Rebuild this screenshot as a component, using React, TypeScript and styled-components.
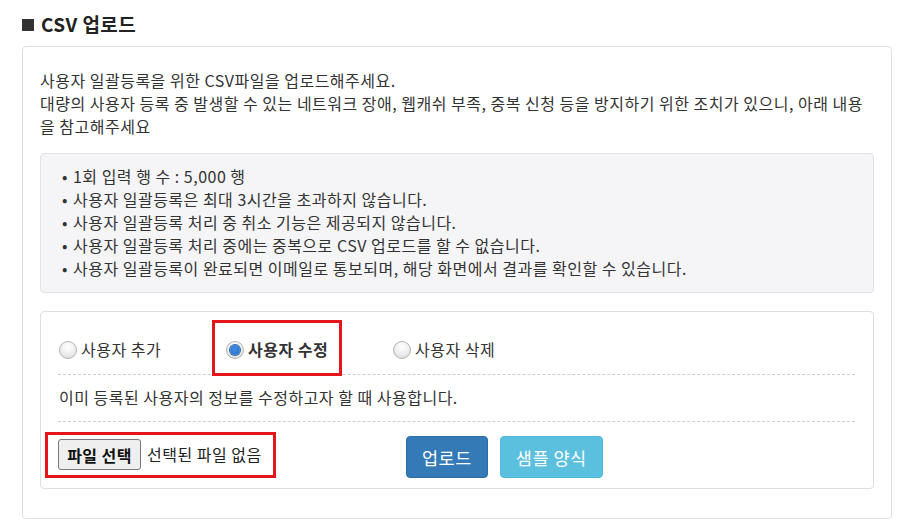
import React from "react";
import styled, { createGlobalStyle } from "styled-components";

const GlobalStyle = createGlobalStyle`
  html, body { margin: 0; padding: 0; background: #fff; }
  body {
    font-family: "Noto Sans CJK KR", "Noto Sans", sans-serif;
    color: #333;
    font-size: 16px;
    letter-spacing: 0.5px;
    line-height: 23px;
  }
  * { box-sizing: border-box; }
`;

const Page = styled.div`
  padding: 12px 15px 13px 22px;
  width: 907px;
`;

const Title = styled.h4`
  margin: 0 0 10px;
  font-size: 19px;
  letter-spacing: 0.4px;
  line-height: 24px;
  font-weight: 700;
  color: #222;
  display: flex;
  align-items: center;
  gap: 7px;
`;

const Square = styled.span`
  display: inline-block;
  width: 12px;
  height: 12px;
  margin-top: 1px;
  background: #333;
`;

const Card = styled.div<{ $pad: string }>`
  border: 1px solid #dfdfe6;
  border-radius: 4px;
  padding: ${(p) => p.$pad};
  background: #fff;
`;

const Intro = styled.p`
  margin: 0;
`;

const Notice = styled.ul`
  margin: 15px 0 18px;
  padding: 11px 21px 12px;
  list-style: none;
  background: #f5f5f7;
  border: 1px solid #e2e2e6;
  border-radius: 4px;
`;

const NoticeItem = styled.li`
  &::before {
    content: "•";
    margin-right: 5px;
  }
`;

const RadioRow = styled.div`
  display: flex;
  padding: 8px 0 13px 1px;
  border-bottom: 1px dashed #cfcfcf;
`;

const RadioItem = styled.label<{ $marked?: boolean }>`
  position: relative;
  width: 167px;
  display: flex;
  align-items: center;
  gap: 4px;
  font-weight: ${(p) => (p.$marked ? 700 : 400)};
  cursor: pointer;
`;

const Marker = styled.span`
  position: absolute;
  left: -14px;
  top: -18px;
  width: 130px;
  height: 56px;
  border: 3px solid #e3161b;
  pointer-events: none;
`;

const Radio = styled.input.attrs({ type: "radio" })`
  appearance: none;
  margin: 0;
  width: 18px;
  height: 18px;
  border-radius: 50%;
  border: 1px solid #b4b4b4;
  background: radial-gradient(circle at 50% 30%, #ffffff 0%, #f1f1f1 45%, #d8d8d8 100%);
  flex: none;
  position: relative;
  &:checked::after {
    content: "";
    position: absolute;
    left: 3px;
    top: 3px;
    width: 10px;
    height: 10px;
    border-radius: 50%;
    background: radial-gradient(circle at 45% 40%, #3f8ae0 0%, #2a6fc4 100%);
    box-shadow: 0 0 0 1px #2b67b0;
  }
`;

const Desc = styled.p`
  margin: 0;
  padding: 11px 0 12px 1px;
  border-bottom: 1px dashed #cfcfcf;
`;

const FileRow = styled.div`
  display: flex;
  align-items: flex-start;
  padding-top: 14px;
`;

const FileArea = styled.div`
  position: relative;
  width: 348px;
  margin-top: 3px;
  display: flex;
  align-items: center;
  gap: 6px;
`;

const FileMarker = styled.span`
  position: absolute;
  left: -13px;
  top: -7px;
  width: 231px;
  height: 46px;
  border: 3px solid #e3161b;
  pointer-events: none;
`;

const FileButton = styled.button`
  height: 31px;
  width: 83px;
  padding: 0;
  border: 1px solid #7a7a7a;
  border-radius: 3px;
  background: #efefef;
  color: #111;
  font-family: inherit;
  font-size: 16px;
  letter-spacing: 0.4px;
  font-weight: 700;
`;

const FileName = styled.span`
  color: #222;
`;

const ActionButton = styled.button<{ $variant: "primary" | "info" }>`
  height: 42px;
  padding: 0 15px;
  margin-right: 12px;
  border-radius: 4px;
  font-family: inherit;
  font-size: 17.5px;
  letter-spacing: 0.5px;
  color: #fff;
  background: ${(p) => (p.$variant === "primary" ? "#337ab7" : "#5bc0de")};
  border: 1px solid ${(p) => (p.$variant === "primary" ? "#2e6da4" : "#4cb9dc")};
`;

export default function App() {
  return (
    <>
      <GlobalStyle />
      <Page>
        <Title>
          <Square />
          CSV 업로드
        </Title>
        <Card $pad="22px 17px 29px">
          <Intro>
            사용자 일괄등록을 위한 CSV파일을 업로드해주세요.
            <br />
            대량의 사용자 등록 중 발생할 수 있는 네트워크 장애, 웹캐쉬 부족, 중복 신청 등을 방지하기 위한 조치가 있으니, 아래 내용을 참고해주세요
          </Intro>
          <Notice>
            <NoticeItem>1회 입력 행 수 : 5,000 행</NoticeItem>
            <NoticeItem>사용자 일괄등록은 최대 3시간을 초과하지 않습니다.</NoticeItem>
            <NoticeItem>사용자 일괄등록 처리 중 취소 기능은 제공되지 않습니다.</NoticeItem>
            <NoticeItem>사용자 일괄등록 처리 중에는 중복으로 CSV 업로드를 할 수 없습니다.</NoticeItem>
            <NoticeItem>사용자 일괄등록이 완료되면 이메일로 통보되며, 해당 화면에서 결과를 확인할 수 있습니다.</NoticeItem>
          </Notice>
          <Card $pad="18px 18px 10px 17px">
            <RadioRow>
              <RadioItem>
                <Radio name="mode" />
                사용자 추가
              </RadioItem>
              <RadioItem $marked>
                <Marker />
                <Radio name="mode" defaultChecked />
                사용자 수정
              </RadioItem>
              <RadioItem>
                <Radio name="mode" />
                사용자 삭제
              </RadioItem>
            </RadioRow>
            <Desc>이미 등록된 사용자의 정보를 수정하고자 할 때 사용합니다.</Desc>
            <FileRow>
              <FileArea>
                <FileMarker />
                <FileButton>파일 선택</FileButton>
                <FileName>선택된 파일 없음</FileName>
              </FileArea>
              <ActionButton $variant="primary">업로드</ActionButton>
              <ActionButton $variant="info">샘플 양식</ActionButton>
            </FileRow>
          </Card>
        </Card>
      </Page>
    </>
  );
}
